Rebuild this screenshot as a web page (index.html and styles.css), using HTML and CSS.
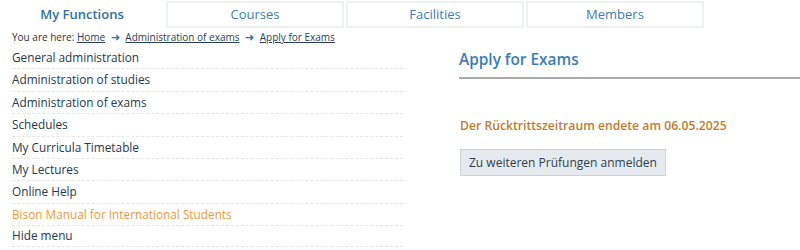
FILE: index.html
```html
<!DOCTYPE html>
<html lang="en">
<head>
    <meta charset="UTF-8">
    <title>Apply for Exams</title>
    <link rel="stylesheet" href="styles.css">
</head>
<body>
    <div class="tabs">
        <a class="tab active" href="#">My Functions</a>
        <a class="tab" href="#">Courses</a>
        <a class="tab" href="#">Facilities</a>
        <a class="tab" href="#">Members</a>
    </div>
    <div class="breadcrumb">
        You are here: <a href="#">Home</a>
        <span class="arrow">&#10140;</span>
        <a href="#">Administration of exams</a>
        <span class="arrow">&#10140;</span>
        <a href="#">Apply for Exams</a>
    </div>
    <div class="page">
        <ul class="menu">
            <li><a href="#">General administration</a></li>
            <li><a href="#">Administration of studies</a></li>
            <li><a href="#">Administration of exams</a></li>
            <li><a href="#">Schedules</a></li>
            <li><a href="#">My Curricula Timetable</a></li>
            <li><a href="#">My Lectures</a></li>
            <li><a href="#">Online Help</a></li>
            <li><a class="manual" href="#">Bison Manual for International Students</a></li>
            <li><a href="#">Hide menu</a></li>
        </ul>
        <div class="content">
            <h1>Apply for Exams</h1>
            <p class="notice">Der Rücktrittszeitraum endete am 06.05.2025</p>
            <button type="button">Zu weiteren Prüfungen anmelden</button>
        </div>
    </div>
</body>
</html>
```

FILE: styles.css
```css
body {
    font-family: 'Open Sans', sans-serif;
    margin: 0;
    background-color: #fff;
    color: #2c3e50;
}

a {
    text-decoration: none;
}

.tabs {
    display: flex;
    gap: 2px;
    height: 28px;
    padding-top: 1px;
}

.tab {
    width: 174px;
    height: 23px;
    border: 2px solid #eef1f2;
    text-align: center;
    line-height: 23px;
    font-size: 13px;
    color: #3e7cb1;
}

.tab.active {
    width: 160px;
    border-color: transparent;
    font-weight: 600;
    color: #2f6fa6;
}

.breadcrumb {
    font-size: 10px;
    color: #333;
    padding: 0 0 0 12px;
    height: 14px;
}

.breadcrumb a {
    color: #2a3f5c;
    text-decoration: underline;
}

.breadcrumb .arrow {
    color: #2f6fa6;
    font-size: 11px;
    margin: 0 3px;
}

.page {
    display: flex;
    padding-top: 4px;
}

.menu {
    list-style: none;
    margin: 0;
    padding: 0 0 0 12px;
    width: 391px;
}

.menu li {
    border-bottom: 1px dashed #e6e6e6;
    height: 21.4px;
    line-height: 20px;
    font-size: 11.8px;
}

.menu li:last-child {
    height: 20px;
    line-height: 19px;
}

.menu a {
    color: #26384e;
}

.menu a.manual {
    color: #f0983c;
}

.content {
    flex: 1;
    margin-left: 56px;
}

h1 {
    font-size: 15.4px;
    font-weight: 600;
    color: #3a7cc0;
    margin: 3px 0 0 0;
    padding-bottom: 7px;
    border-bottom: 2px solid #aaa;
    line-height: 20px;
}

.notice {
    color: #c47a2e;
    font-size: 12.2px;
    font-weight: 600;
    margin: 38px 0 0 1px;
    line-height: 17px;
}

button {
    font-family: 'Open Sans', sans-serif;
    background-color: #e6eaee;
    border: 1px solid #cfd3d6;
    color: #2c3e50;
    font-size: 12px;
    height: 27px;
    padding: 0 8px;
    margin: 15px 0 0 1px;
}
```
